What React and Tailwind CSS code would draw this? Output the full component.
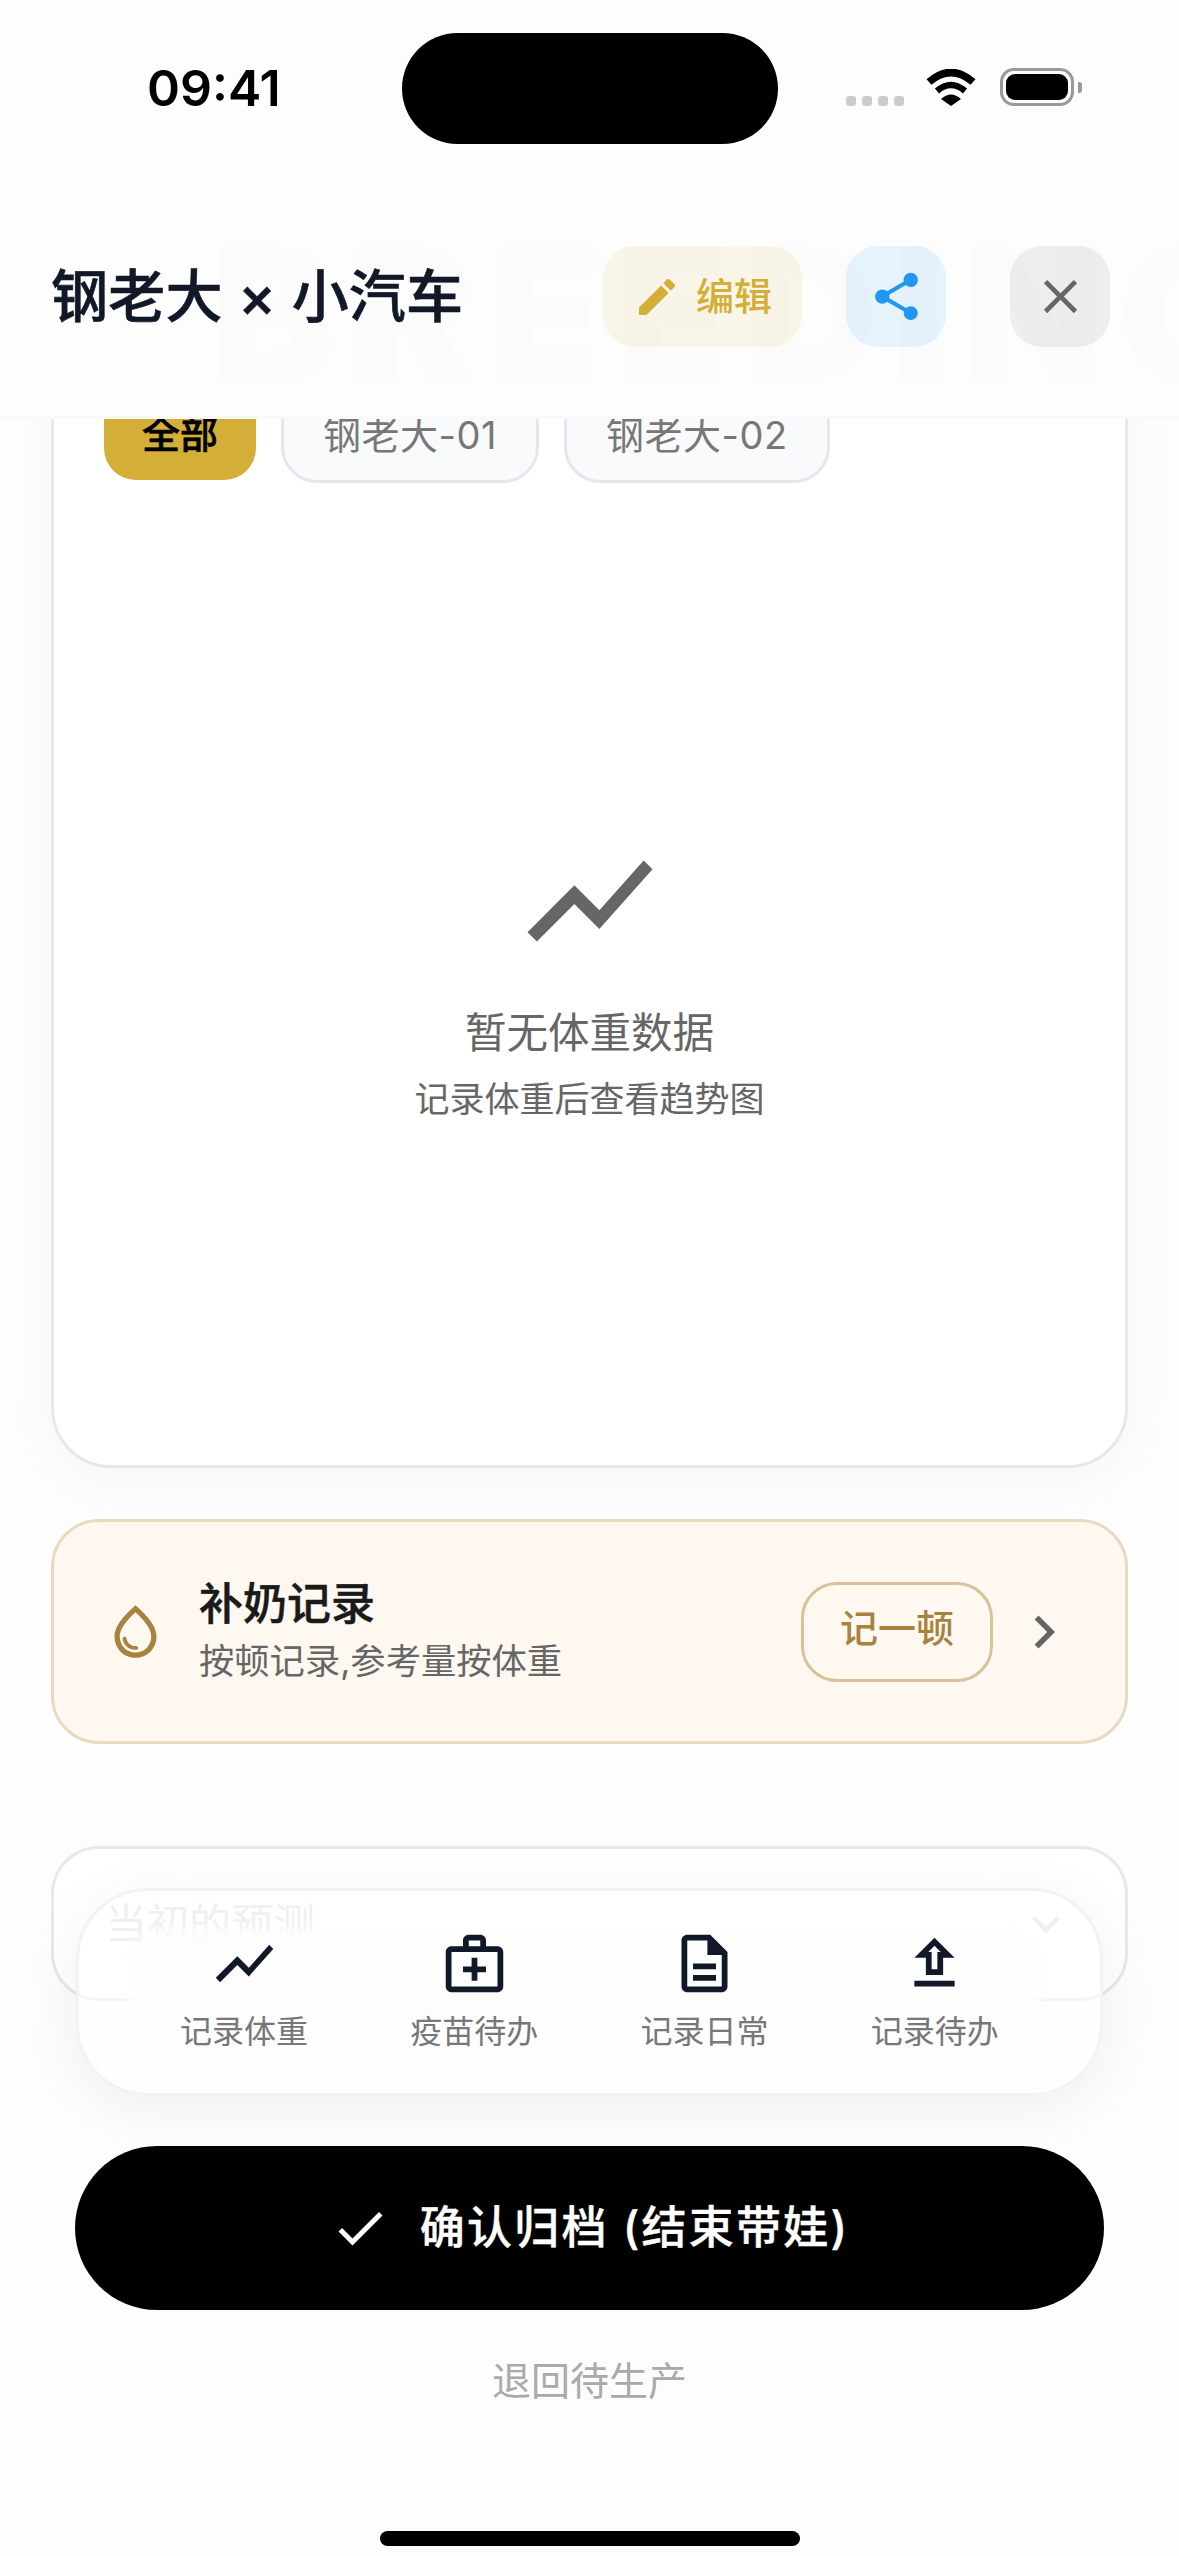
import React from 'react';

const PATHS = {
  chart: 'M3.5 18.49l6-6.01 4 4L22 6.92l-1.41-1.41-7.09 7.97-4-4L2 16.99z',
  medical: 'M20 6h-4V4c0-1.1-.9-2-2-2h-4c-1.1 0-2 .9-2 2v2H4c-1.1 0-2 .9-2 2v12c0 1.1.9 2 2 2h16c1.1 0 2-.9 2-2V8c0-1.1-.9-2-2-2zM10 4h4v2h-4V4zm10 16H4V8h16v12zM13 10h-2v3H8v2h3v3h2v-3h3v-2h-3z',
  doc: 'M8 16h8v2H8zm0-4h8v2H8zm6-10H6c-1.1 0-2 .9-2 2v16c0 1.1.89 2 1.99 2H18c1.1 0 2-.9 2-2V8l-6-6zm4 18H6V4h7v5h5v11z',
  upload: 'M9 16h6v-6h4l-7-7-7 7h4v6zm3-10.17L14.17 8H13v6h-2V8H9.83L12 5.83zM5 18h14v2H5z',
  share: 'M18 16.08c-.76 0-1.44.3-1.96.77L8.91 12.7c.05-.23.09-.46.09-.7s-.04-.47-.09-.7l7.05-4.11c.54.5 1.25.81 2.04.81 1.66 0 3-1.34 3-3s-1.34-3-3-3-3 1.34-3 3c0 .24.04.47.09.7L8.04 9.81C7.5 9.31 6.79 9 6 9c-1.66 0-3 1.34-3 3s1.34 3 3 3c.79 0 1.5-.31 2.04-.81l7.12 4.16c-.05.21-.08.43-.08.65 0 1.61 1.31 2.92 2.92 2.92s2.92-1.31 2.92-2.92-1.31-2.92-2.92-2.92z',
  close: 'M19 6.41L17.59 5 12 10.59 6.41 5 5 6.41 10.59 12 5 17.59 6.41 19 12 13.41 17.59 19 19 17.59 13.41 12z',
  edit: 'M3 17.25V21h3.75L17.81 9.94l-3.75-3.75L3 17.25zM20.71 7.04c.39-.39.39-1.02 0-1.41l-2.34-2.34c-.39-.39-1.02-.39-1.41 0l-1.83 1.83 3.75 3.75 1.83-1.83z',
  drop: 'M12 2c-5.33 4.55-8 8.48-8 11.8 0 4.98 3.8 8.2 8 8.2s8-3.22 8-8.2c0-3.32-2.67-7.25-8-11.8zm0 18c-3.35 0-6-2.57-6-6.2 0-2.34 1.95-5.44 6-9.14 4.05 3.7 6 6.79 6 9.14 0 3.63-2.65 6.2-6 6.2zm-4.17-6c.37 0 .67.26.74.62.41 2.22 2.28 2.98 3.64 2.87.43-.02.79.32.79.75 0 .4-.32.73-.72.75-2.13.13-4.62-1.09-5.19-4.12-.08-.45.28-.87.74-.87z',
  right: 'M10 6L8.59 7.41 13.17 12l-4.58 4.59L10 18l6-6z',
  down: 'M16.59 8.59L12 13.17 7.41 8.59 6 10l6 6 6-6z',
  check: 'M9 16.17L4.83 12l-1.42 1.41L9 19 21 7l-1.41-1.41z',
};

function Icon({ name, className }) {
  return (
    <svg viewBox="0 0 24 24" fill="currentColor" className={`shrink-0 ${className}`}>
      <path d={PATHS[name]} />
    </svg>
  );
}

function StatusBar() {
  return (
    <div className="flex items-start pt-[33px] text-black">
      <div className="w-[402px] pl-[147px] pt-[30px] text-[50px] leading-[50px] font-semibold">09:41</div>
      <div className="w-[376px] h-[111px] rounded-[56px] bg-black" />
      <div className="ml-[68px] mt-[35px] flex items-start">
        <div className="flex gap-[6px] mt-[28px]">
          <div className="w-[10px] h-[10px] rounded-[3px] bg-[#cccccc]" />
          <div className="w-[10px] h-[10px] rounded-[3px] bg-[#cccccc]" />
          <div className="w-[10px] h-[10px] rounded-[3px] bg-[#cccccc]" />
          <div className="w-[10px] h-[10px] rounded-[3px] bg-[#cccccc]" />
        </div>
        <svg viewBox="0 0 50 37" className="w-[50px] h-[37px] ml-[22px] mt-[1px]">
          <path d="M3 13Q25-6 47 13" fill="none" stroke="black" strokeWidth="7.5" />
          <path d="M11 22Q25 10 39 22" fill="none" stroke="black" strokeWidth="6.5" />
          <path d="M15 30Q25 21 35 30L25 37Z" fill="black" />
        </svg>
        <div className="ml-[24px] flex items-center">
          <div className="w-[74px] h-[38px] rounded-[14px] border-[3px] border-[#999999] p-[3px]">
            <div className="w-full h-full rounded-[9px] bg-black" />
          </div>
          <div className="ml-[4px] w-[4px] h-[11px] rounded-r-[3px] bg-[#999999]" />
        </div>
      </div>
    </div>
  );
}

function TabChip({ label, active }) {
  if (active) {
    return (
      <div className="h-[92px] px-[38px] rounded-[32px] bg-[#d4af37] flex items-center text-[38px] font-medium [-webkit-text-stroke:0.6px_black] text-black">
        {label}
      </div>
    );
  }
  return (
    <div className="h-[95px] px-[39px] rounded-[36px] border-[3px] border-[#e5e7eb] bg-[#f8fafc] flex items-center text-[38px] tracking-[0.5px] text-[#777777]">
      {label}
    </div>
  );
}

function ToolItem({ icon, label }) {
  return (
    <div className="flex flex-col items-center">
      <Icon name={icon} className="w-[69px] h-[69px] text-[#111827]" />
      <span className="mt-[14px] text-[32px] leading-[40px] text-[#777777]">{label}</span>
    </div>
  );
}

export default function App() {
  return (
    <div className="relative w-[1179px] h-[2556px] overflow-hidden bg-[#fdfdfd] font-['Inter','Noto_Sans_CJK_SC',sans-serif]">
      {/* scrolled content */}
      <main className="px-[51px] pt-[300px]">
        <section className="h-[1168px] rounded-[60px] border-[3px] border-[#e7e8ec] bg-white shadow-[0_12px_60px_rgba(0,0,0,0.03)] flex flex-col">
          <div className="flex items-start gap-[25px] pl-[50px] pt-[85px]">
            <TabChip label="全部" active />
            <TabChip label="钢老大-01" />
            <TabChip label="钢老大-02" />
          </div>
          <div className="flex flex-col items-center mt-[343px] text-[#666666]">
            <Icon name="chart" className="w-[150px] h-[150px]" />
            <p className="mt-[36px] text-[41.5px] leading-[42px]">暂无体重数据</p>
            <p className="mt-[27px] text-[35px] leading-[36px]">记录体重后查看趋势图</p>
          </div>
        </section>

        <section className="mt-[51px] h-[225px] rounded-[48px] border-[3px] border-[#e8d9c0] bg-[#fff8f1] flex items-center pl-[50px] pr-[48px]">
          <Icon name="drop" className="w-[63px] h-[63px] text-[#a88340]" />
          <div className="ml-[32px] flex-1">
            <p className="text-[44px] leading-[50px] font-medium [-webkit-text-stroke:0.5px_#1a1a1a] text-[#1a1a1a]">补奶记录</p>
            <p className="mt-[11px] text-[35.3px] leading-[44px] text-[#666666]">按顿记录,参考量按体重</p>
          </div>
          <div className="w-[192px] h-[100px] pb-[6px] rounded-[36px] border-[3px] border-[#d9c297] flex items-center justify-center text-[38px] font-medium text-[#a88340]">
            记一顿
          </div>
          <Icon name="right" className="ml-[18px] w-[66px] h-[66px] text-[#666666]" />
        </section>

        <section className="mt-[102px] h-[155px] rounded-[48px] border-[3px] border-[#ebe8e1] bg-white flex items-center justify-between pl-[51px] pr-[51px]">
          <span className="text-[42px] text-[#d9d9d9]">当初的预测</span>
          <Icon name="down" className="w-[56px] h-[56px] text-[#d9d9d9]" />
        </section>
      </main>

      {/* fixed header with watermark */}
      <header className="absolute top-0 inset-x-0 h-[419px] overflow-hidden bg-[#fdfdfd] border-b-[3px] border-[#f9f9f9]">
        <div className="absolute left-[212px] top-[214px] text-[183px] leading-[200px] font-black tracking-[16px] whitespace-nowrap text-[#fbfbfb]">
          BREEDING
        </div>
        <div className="relative">
          <StatusBar />
          <div className="mt-[102px] h-[101px] flex items-center pl-[51px] pr-[69px]">
            <h1 className="flex-1 text-[57px] leading-[70px] font-medium tracking-[0.2px] [-webkit-text-stroke:0.6px_#111827] text-[#111827] whitespace-nowrap">钢老大 × 小汽车</h1>
            <button className="h-[101px] w-[199px] rounded-[32px] bg-[#d4af37]/[0.1] pl-[30px] flex items-center gap-[15px] text-[#d4af37] text-[38px] font-medium">
              <Icon name="edit" className="w-[48px] h-[48px]" />
              编辑
            </button>
            <button className="ml-[44px] h-[101px] w-[100px] rounded-[32px] bg-[#2196f3]/[0.1] flex items-center justify-center text-[#2196f3]">
              <Icon name="share" className="w-[57px] h-[57px]" />
            </button>
            <button className="ml-[64px] h-[101px] w-[100px] rounded-[32px] bg-black/[0.06] flex items-center justify-center text-[#666666]">
              <Icon name="close" className="w-[57px] h-[57px]" />
            </button>
          </div>
        </div>
      </header>

      {/* floating toolbar */}
      <div className="absolute left-[76px] top-[1888px] w-[1027px] h-[208px] rounded-[72px] border-[3px] border-[#f3f3f1] bg-white/60 shadow-[0_10px_60px_rgba(0,0,0,0.06)] pt-[38px] px-[50px]">
        <div className="absolute left-[52px] right-[62px] top-[38px] bottom-[10px] rounded-[30px] bg-[#fdfdfd] blur-[6px]" />
        <div className="relative grid grid-cols-4">
          <ToolItem icon="chart" label="记录体重" />
          <ToolItem icon="medical" label="疫苗待办" />
          <ToolItem icon="doc" label="记录日常" />
          <ToolItem icon="upload" label="记录待办" />
        </div>
      </div>

      {/* bottom actions */}
      <footer className="absolute left-0 right-0 top-[2146px] flex flex-col items-center">
        <button className="w-[1029px] h-[164px] rounded-full bg-black text-white flex items-center justify-center gap-[30px] text-[45px] font-medium tracking-[2.2px] [-webkit-text-stroke:0.4px_white]">
          <Icon name="check" className="w-[60px] h-[60px]" />
          确认归档 (结束带娃)
        </button>
        <span className="mt-[47px] text-[39px] leading-[48px] text-[#aaaaaa]">退回待生产</span>
        <div className="mt-[126px] w-[420px] h-[15px] rounded-full bg-black" />
      </footer>
    </div>
  );
}
